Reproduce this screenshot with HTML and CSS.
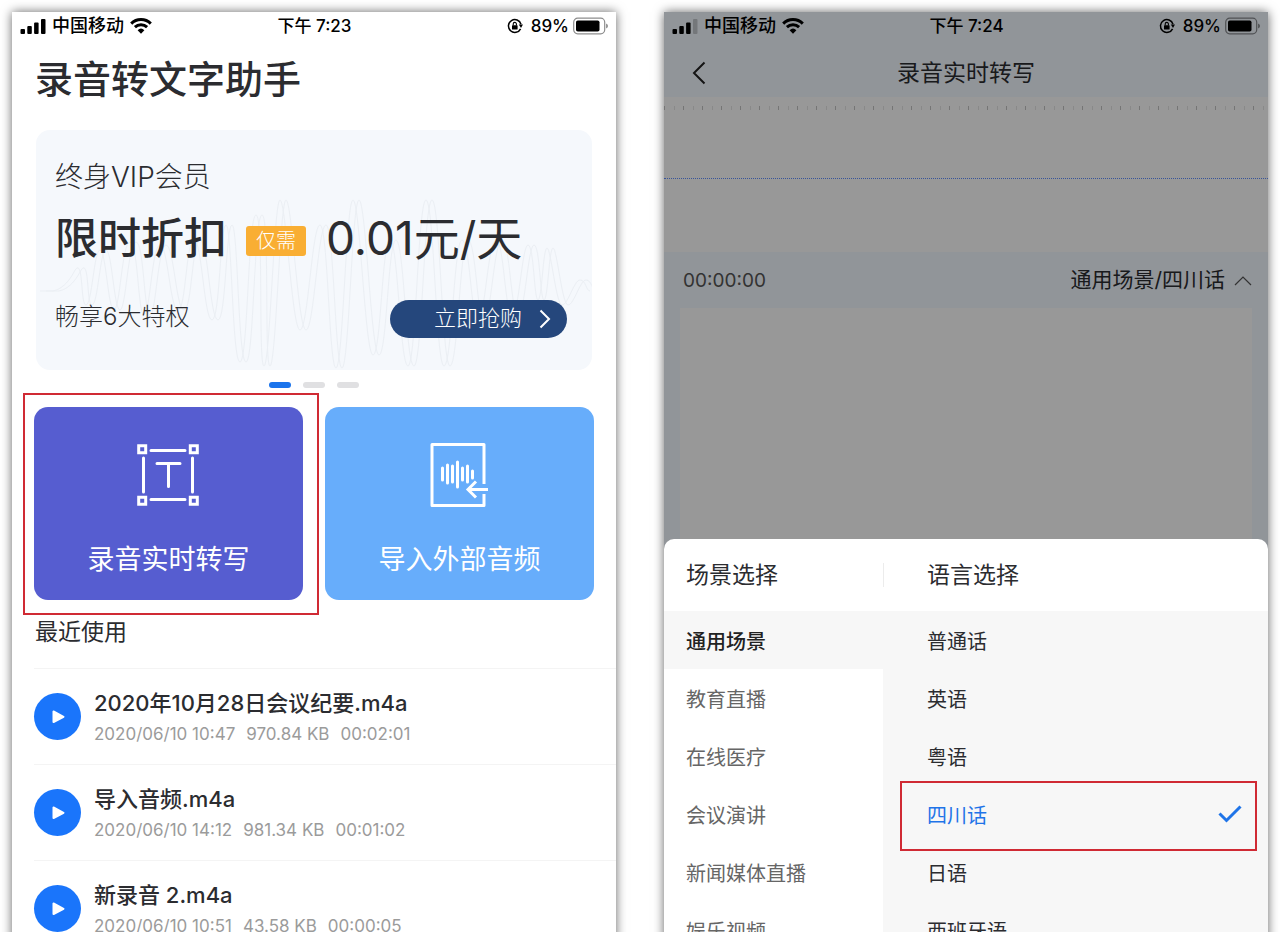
FILE: index.html
```html
<!DOCTYPE html>
<html lang="zh-CN">
<head>
    <meta charset="UTF-8">
    <meta name="viewport" content="width=device-width, initial-scale=1.0">
    <title>录音转文字助手</title>
    <link rel="stylesheet" href="styles.css">
</head>
<body>

<!-- 公用图标 -->
<svg class="sprite" aria-hidden="true">
    <symbol id="wifi" viewBox="0 0 22 16">
        <path d="M1.2 5.6a14 14 0 0 1 19.6 0M4.9 9.2a8.8 8.8 0 0 1 12.2 0" fill="none" stroke="currentColor" stroke-width="3"/>
        <path d="M7.600 12.200a5 5 0 0 1 6.800 0L11 15.800z" fill="currentColor"/>
    </symbol>
    <symbol id="lock" viewBox="0 0 16 16">
        <path d="M13.600 10.800A6.400 6.400 0 1 1 14 6.200" fill="none" stroke="currentColor" stroke-width="1.500"/>
        <path d="M11.800 6.500h4.200l-2 3.400z" fill="currentColor"/>
        <rect x="5" y="7.200" width="5.600" height="4.400" rx=".6" fill="currentColor"/>
        <path d="M6.200 7.500V6a1.600 1.600 0 0 1 3.200 0v1.500" fill="none" stroke="currentColor" stroke-width="1.100"/>
    </symbol>
    <symbol id="battery" viewBox="0 0 36 18">
        <rect x=".7" y="1.200" width="31" height="15.600" rx="4" fill="none" stroke="currentColor" stroke-opacity=".45" stroke-width="1.200"/>
        <rect x="3" y="3.500" width="23.500" height="11" rx="1.800" fill="currentColor"/>
        <path d="M33.200 6.500v5a2.700 2.700 0 0 0 0-5z" fill="currentColor" fill-opacity=".5"/>
    </symbol>
    <symbol id="play" viewBox="0 0 47 47">
        <path d="M19.500 18.500v10.600l10-5.300z" fill="#fff" stroke="#fff" stroke-width="2" stroke-linejoin="round"/>
    </symbol>
</svg>

<main class="phones">

    <!-- 首页 -->
    <section class="phone">
        <div class="status">
            <div class="status-left">
                <svg width="26" height="16" viewBox="0 0 26 16"><rect x=".5" y="11" width="4.500" height="5" rx="1"/><rect x="7.300" y="8" width="4.500" height="8" rx="1"/><rect x="14.100" y="4.500" width="4.500" height="11.500" rx="1"/><rect x="21" y="1" width="4.500" height="15" rx="1"/></svg>
                <span>中国移动</span>
                <svg width="22" height="16"><use href="#wifi"/></svg>
            </div>
            <span class="status-time">下午 7:23</span>
            <div class="status-right">
                <svg width="16" height="16"><use href="#lock"/></svg>
                <span class="percent">89%</span>
                <svg width="36" height="18"><use href="#battery"/></svg>
            </div>
        </div>

        <h1>录音转文字助手</h1>

        <div class="banner">
            <svg class="wave" viewBox="0 0 556 240" preserveAspectRatio="none">
                <path id="w" d="M4 161H16S28 161 38 142S44 175 50 175S58 120 64 120S72 180 78 180S86 112 94 112S102 185 108 185S116 115 124 115S134 180 142 180S150 110 158 110S168 190 176 190S184 95 190 95S196 232 204 232S212 85 220 85S222 236 228 236S238 70 244 70S256 200 264 200S276 95 284 95S293 238 300 238S310 70 317 70S329 225 337 225S346 110 354 110S364 236 372 236S382 70 390 70S400 236 408 236S418 110 426 110S435 190 442 190S452 110 460 110S469 185 476 185S486 115 492 115S498 170 502 170S507 118 511 118S520 175 526 175S538 150 544 150S550 161 554 161"/>
                <use href="#w" x="6"/>
            </svg>
            <p class="vip">终身VIP会员</p>
            <p class="deal">限时折扣<span class="badge">仅需</span><span class="price">0.01元/天</span></p>
            <div class="banner-foot">
                <span>畅享6大特权</span>
                <button class="buy" type="button">立即抢购
                    <svg width="12" height="20" viewBox="0 0 12 20"><path d="M1.500 1.500 10 10l-8.500 8.500" fill="none" stroke="#fff" stroke-width="2"/></svg>
                </button>
            </div>
        </div>

        <div class="dots"><i class="on"></i><i></i><i></i></div>

        <div class="cards">
            <button class="card live marked" type="button">
                <svg width="64" height="64" viewBox="0 0 64 64" fill="none" stroke="#fff" stroke-width="3">
                    <path d="M1.700 2.700h7v7h-7zM53.300 2.700h7v7h-7zM1.700 54.300h7v7h-7zM53.300 54.300h7v7h-7z"/>
                    <path d="M14 7.500h34M14 56.500h34M6.500 15v34M55.500 15v34M20 20.500h23M31.500 20.500v23" stroke-linecap="round"/>
                </svg>
                录音实时转写
            </button>
            <button class="card import" type="button">
                <svg width="64" height="64" viewBox="0 0 64 64" fill="none" stroke="#fff" stroke-width="3">
                    <path d="M56 41V1.500H4v61h52V51" stroke-linejoin="round"/>
                    <path d="M14.500 25v12M19.500 22v18M24.500 23v16M29.500 19v25M34.500 25v12M39.500 23v16M44.500 28v7" stroke-linecap="round"/>
                    <path d="M60 46.500H41M48 38.500l-8 8 8 8"/>
                </svg>
                导入外部音频
            </button>
        </div>

        <h2>最近使用</h2>
        <ul class="records">
            <li>
                <button class="play" type="button" aria-label="播放"><svg width="47" height="47"><use href="#play"/></svg></button>
                <div>
                    <p class="name">2020年10月28日会议纪要.m4a</p>
                    <p class="meta"><span>2020/06/10 10:47</span><span>970.84 KB</span><span>00:02:01</span></p>
                </div>
            </li>
            <li>
                <button class="play" type="button" aria-label="播放"><svg width="47" height="47"><use href="#play"/></svg></button>
                <div>
                    <p class="name">导入音频.m4a</p>
                    <p class="meta"><span>2020/06/10 14:12</span><span>981.34 KB</span><span>00:01:02</span></p>
                </div>
            </li>
            <li>
                <button class="play" type="button" aria-label="播放"><svg width="47" height="47"><use href="#play"/></svg></button>
                <div>
                    <p class="name">新录音 2.m4a</p>
                    <p class="meta"><span>2020/06/10 10:51</span><span>43.58 KB</span><span>00:00:05</span></p>
                </div>
            </li>
        </ul>
    </section>

    <!-- 实时转写 -->
    <section class="phone">
        <div class="dimmed">
            <div class="status">
                <div class="status-left">
                    <svg width="26" height="16" viewBox="0 0 26 16"><rect x=".5" y="11" width="4.500" height="5" rx="1"/><rect x="7.300" y="8" width="4.500" height="8" rx="1"/><rect x="14.100" y="4.500" width="4.500" height="11.500" rx="1"/><rect x="21" y="1" width="4.500" height="15" rx="1" opacity=".2"/></svg>
                    <span>中国移动</span>
                    <svg width="22" height="16"><use href="#wifi"/></svg>
                </div>
                <span class="status-time">下午 7:24</span>
                <div class="status-right">
                    <svg width="16" height="16"><use href="#lock"/></svg>
                    <span class="percent">89%</span>
                    <svg width="36" height="18"><use href="#battery"/></svg>
                </div>
            </div>
            <div class="nav">
                <button class="back" type="button" aria-label="返回">
                    <svg width="14" height="24" viewBox="0 0 14 24"><path d="M12.500 1.500 2 12l10.500 10.500" fill="none" stroke="#222" stroke-width="2"/></svg>
                </button>
                <h2>录音实时转写</h2>
            </div>
            <div class="track">
                <div class="ruler"></div>
                <div class="baseline"></div>
            </div>
            <div class="toolbar">
                <span class="timer">00:00:00</span>
                <button class="picker" type="button">通用场景/四川话
                    <svg width="18" height="11" viewBox="0 0 18 11"><path d="M1 10l8-8 8 8" fill="none" stroke="#555" stroke-width="1.200"/></svg>
                </button>
            </div>
            <div class="result"></div>
        </div>

        <div class="sheet">
            <div class="sheet-head">
                <h3>场景选择</h3>
                <h3>语言选择</h3>
            </div>
            <div class="sheet-body">
                <ul class="scenes">
                    <li><button class="active" type="button">通用场景</button></li>
                    <li><button type="button">教育直播</button></li>
                    <li><button type="button">在线医疗</button></li>
                    <li><button type="button">会议演讲</button></li>
                    <li><button type="button">新闻媒体直播</button></li>
                    <li><button type="button">娱乐视频</button></li>
                </ul>
                <ul class="langs">
                    <li><button type="button">普通话</button></li>
                    <li><button type="button">英语</button></li>
                    <li><button type="button">粤语</button></li>
                    <li><button class="active marked" type="button">四川话
                        <svg width="24" height="18" viewBox="0 0 24 18"><path d="M1.500 8.500 8.500 15.500 22.500 1.500" fill="none" stroke="#1f74e8" stroke-width="3"/></svg>
                    </button></li>
                    <li><button type="button">日语</button></li>
                    <li><button type="button">西班牙语</button></li>
                </ul>
            </div>
        </div>
    </section>

</main>

</body>
</html>
```

FILE: styles.css
```css
* {
    box-sizing: border-box;
    margin: 0;
    padding: 0;
}
body {
    height: 100vh;
    overflow: hidden;
    background: #fff;
    color: #2b2c30;
    font-family: Inter, "Noto Sans CJK SC", sans-serif;
}
button {
    border: none;
    background: none;
    color: inherit;
    font: inherit;
    cursor: pointer;
}
ul {
    list-style: none;
}
svg {
    display: block;
    flex: none;
}
.sprite {
    position: absolute;
    width: 0;
    height: 0;
}
.phones {
    display: grid;
    grid-template-columns: 1fr 1fr;
    gap: 48px;
    padding: 12px 12px 0;
}
.phone {
    min-height: 100vh;
    background: #fff;
    box-shadow: 0 0 10px rgba(0, 0, 0, 0.6);
}

/* 状态栏 */
.status {
    display: grid;
    grid-template-columns: 1fr auto 1fr;
    align-items: center;
    height: 28px;
    padding: 0 7px 0 8px;
    color: #000;
    font-size: 17px;
    font-weight: 500;
    line-height: 28px;
}
.status-left,
.status-right {
    display: flex;
    align-items: center;
}
.status-left {
    gap: 6px;
    font-size: 18px;
}
.status-right {
    justify-content: flex-end;
}
.percent {
    margin: 0 4px 0 8px;
}

/* 首页 */
h1 {
    margin: 12px 23px 24px;
    font-size: 38px;
    font-weight: 500;
    line-height: 54px;
}
.banner {
    position: relative;
    height: 240px;
    margin: 0 24px;
    padding: 27px 25px 0 19px;
    border-radius: 14px;
    background: #f5f8fc;
}
.wave {
    position: absolute;
    inset: 0;
    width: 100%;
    height: 100%;
    fill: none;
    stroke: #ebeff4;
}
.banner p,
.banner-foot {
    position: relative;
}
.vip {
    font-size: 28px;
    font-weight: 300;
    line-height: 40px;
}
.deal {
    display: flex;
    align-items: center;
    margin-top: 11px;
    font-size: 43px;
    font-weight: 500;
    line-height: 60px;
}
.badge {
    margin: 6px 20px 0 19px;
    padding: 0 10px;
    border-radius: 3px;
    background: #f9ae33;
    color: #fff;
    font-size: 20px;
    font-weight: 300;
    line-height: 30px;
}
.price {
    font-size: 46px;
    font-weight: 400;
}
.banner-foot {
    display: flex;
    justify-content: space-between;
    align-items: flex-start;
    margin-top: 32px;
    font-size: 24px;
    font-weight: 300;
    line-height: 34px;
}
.buy {
    display: flex;
    align-items: flex-start;
    gap: 17px;
    height: 38px;
    padding: 0 16px 0 44px;
    border-radius: 19px;
    background: #25477c;
    color: #fff;
    font-size: 22px;
    line-height: 36px;
}
.buy svg {
    margin-top: 9px;
}
.dots {
    display: flex;
    justify-content: center;
    gap: 12px;
    padding: 12px 0 19px;
}
.dots i {
    width: 22px;
    height: 6px;
    border-radius: 3px;
    background: #e0e0e2;
}
.dots .on {
    background: #1b74ec;
}
.cards {
    display: grid;
    grid-template-columns: 1fr 1fr;
    gap: 22px;
    padding: 0 22px;
}
.card {
    display: flex;
    flex-direction: column;
    align-items: center;
    gap: 33px;
    height: 193px;
    padding-top: 36px;
    border-radius: 14px;
    color: #fff;
    font-size: 27px;
    line-height: 40px;
}
.live {
    background: #565dd0;
}
.import {
    background: #67adfb;
}

/* 红色标注框 */
.marked {
    position: relative;
}
.marked::after {
    content: "";
    position: absolute;
    border: 2px solid #d02a34;
}
.live.marked::after {
    inset: -14px -16px -15px -11px;
}
.langs .marked::after {
    inset: -4px 11px -8px 17px;
}

h2 {
    font-size: 23px;
    font-weight: 400;
    line-height: 34px;
}
.cards + h2 {
    margin: 15px 23px 19px;
}
.records li {
    display: flex;
    align-items: center;
    gap: 13px;
    height: 96px;
    margin-left: 22px;
    border-top: 1px solid #f4f4f4;
}
.play {
    width: 47px;
    height: 47px;
    border-radius: 50%;
    background: #1a75fb;
}
.name {
    font-size: 22px;
    font-weight: 500;
    line-height: 34px;
}
.meta {
    display: flex;
    gap: 11px;
    color: #9b9b9b;
    font-size: 17px;
    line-height: 28px;
}

/* 实时转写 */
.dimmed {
    position: relative;
    background: #f2f8ff;
}
.dimmed::after {
    content: "";
    position: absolute;
    inset: 0;
    background: rgba(0, 0, 0, 0.4);
}
.nav {
    display: grid;
    grid-template-columns: 44px 1fr 44px;
    align-items: center;
    height: 57px;
    padding: 9px 28px 0;
    text-align: center;
}
.track {
    height: 155px;
    padding-top: 9px;
    background: #fdfdfd;
}
.ruler {
    height: 4px;
    background: repeating-linear-gradient(90deg, #c4c4c4 0 1px, transparent 1px 10px, #e4e4e4 10px 11px, transparent 11px 19px);
}
.baseline {
    margin-top: 68px;
    border-top: 1px dotted #5e8cff;
}
.toolbar {
    display: flex;
    justify-content: space-between;
    align-items: center;
    height: 56px;
    padding: 0 16px 0 19px;
}
.timer {
    color: #555;
    font-size: 19px;
}
.picker {
    display: flex;
    align-items: center;
    gap: 9px;
    font-size: 21px;
    line-height: 32px;
}
.result {
    height: 241px;
    margin: 0 16px;
    background: #fdfdfd;
}
.sheet {
    position: relative;
    margin-top: -10px;
    border-radius: 10px 10px 0 0;
    background: #fff;
}
.sheet-head,
.sheet-body {
    display: grid;
    grid-template-columns: 219px 1fr;
}
.sheet-head {
    align-items: center;
    height: 72px;
}
h3 {
    padding-left: 22px;
    font-size: 23px;
    font-weight: 400;
    line-height: 24px;
}
h3 + h3 {
    padding-left: 43px;
    border-left: 1px solid #ececec;
}
.sheet button {
    display: flex;
    justify-content: space-between;
    align-items: center;
    width: 100%;
    height: 58px;
    font-size: 20px;
}
.scenes button {
    padding-left: 22px;
    color: #666;
}
.scenes .active {
    background: #f7f7f7;
    color: #222;
    font-weight: 500;
}
.langs {
    background: #f7f7f7;
}
.langs button {
    padding: 0 26px 0 44px;
}
.langs .active {
    color: #1f74e8;
}
```
